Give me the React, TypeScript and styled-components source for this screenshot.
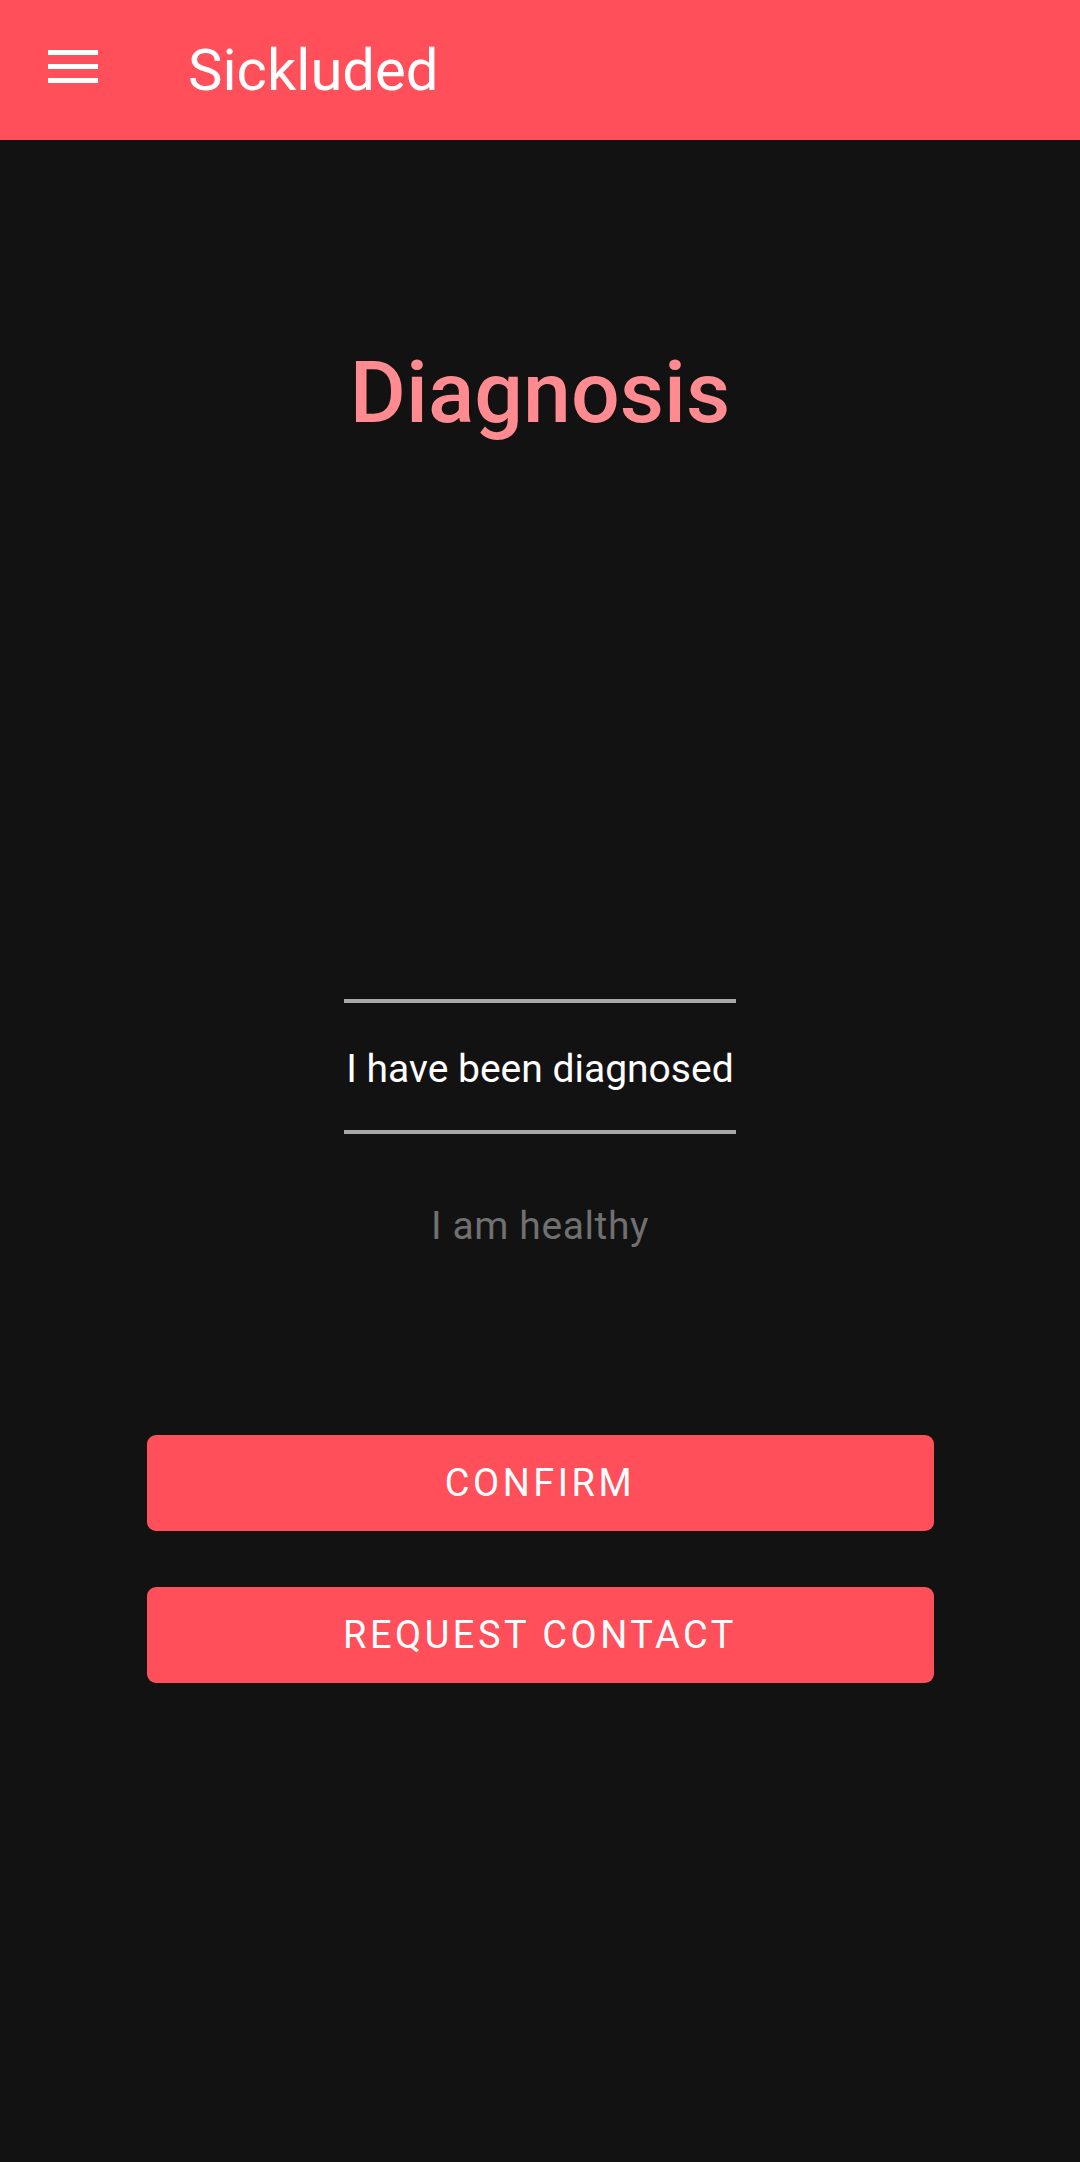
import React, { useState } from "react";
import styled, { createGlobalStyle } from "styled-components";

const GlobalStyle = createGlobalStyle`
  html, body {
    margin: 0;
    padding: 0;
    background: #121212;
  }
  body {
    font-family: Roboto, "Noto Sans", sans-serif;
  }
`;

const Page = styled.div`
  width: 1080px;
  min-height: 2162px;
  background: #121212;
  display: flex;
  flex-direction: column;
`;

const AppBar = styled.header`
  height: 140px;
  background: #ff4f5a;
  display: flex;
  align-items: center;
  padding-left: 48px;
  gap: 90px;
  box-sizing: border-box;
`;

const MenuButton = styled.button`
  border: 0;
  padding: 0;
  background: none;
  width: 50px;
  height: 34px;
  margin-top: -6px;
  display: flex;
  cursor: pointer;
`;

const AppTitle = styled.h1`
  margin: 0;
  font-size: 58px;
  font-weight: 400;
  color: #ffffff;
  line-height: 1;
`;

const Main = styled.main`
  display: flex;
  flex-direction: column;
  align-items: center;
`;

const Heading = styled.h2`
  margin: 210px 0 0;
  font-size: 86px;
  font-weight: 500;
  line-height: 1;
  color: #ff8a8f;
`;

const Picker = styled.div`
  margin-top: 563px;
  width: 392px;
  display: flex;
  flex-direction: column;
  align-items: center;
`;

const Divider = styled.div`
  width: 100%;
  height: 4px;
  background: #a8a8a8;
`;

const Option = styled.div<{ $selected?: boolean }>`
  width: 100%;
  box-sizing: border-box;
  text-align: center;
  font-size: 39px;
  line-height: 1;
  white-space: nowrap;
  color: ${(p) => (p.$selected ? "#ffffff" : "#707070")};
  letter-spacing: ${(p) => (p.$selected ? "0" : "0.6px")};
  height: ${(p) => (p.$selected ? "127px" : "auto")};
  padding-top: ${(p) => (p.$selected ? "47px" : "73px")};
  cursor: pointer;
`;

const Actions = styled.div`
  margin-top: 189px;
  width: 787px;
  display: flex;
  flex-direction: column;
  gap: 56px;
`;

const ActionButton = styled.button`
  height: 96px;
  border: 0;
  border-radius: 9px;
  background: #ff4f5a;
  color: #ffffff;
  font-family: Roboto, "Noto Sans", sans-serif;
  font-size: 38px;
  font-weight: 400;
  letter-spacing: 3.5px;
  text-transform: uppercase;
  cursor: pointer;
`;

const MenuIcon = () => (
  <svg width="50" height="34" viewBox="0 0 50 34">
    <rect x="0" y="0" width="50" height="5" fill="#fff" />
    <rect x="0" y="14" width="50" height="5" fill="#fff" />
    <rect x="0" y="28" width="50" height="5" fill="#fff" />
  </svg>
);

export default function App() {
  const [diagnosed, setDiagnosed] = useState(true);
  return (
    <>
      <GlobalStyle />
      <Page>
        <AppBar>
          <MenuButton aria-label="menu">
            <MenuIcon />
          </MenuButton>
          <AppTitle>Sickluded</AppTitle>
        </AppBar>
        <Main>
          <Heading>Diagnosis</Heading>
          <Picker>
            <Divider />
            <Option $selected onClick={() => setDiagnosed(true)}>
              {diagnosed ? "I have been diagnosed" : "I am healthy"}
            </Option>
            <Divider />
            <Option onClick={() => setDiagnosed(false)}>
              {diagnosed ? "I am healthy" : "I have been diagnosed"}
            </Option>
          </Picker>
          <Actions>
            <ActionButton>Confirm</ActionButton>
            <ActionButton>Request contact</ActionButton>
          </Actions>
        </Main>
      </Page>
    </>
  );
}
